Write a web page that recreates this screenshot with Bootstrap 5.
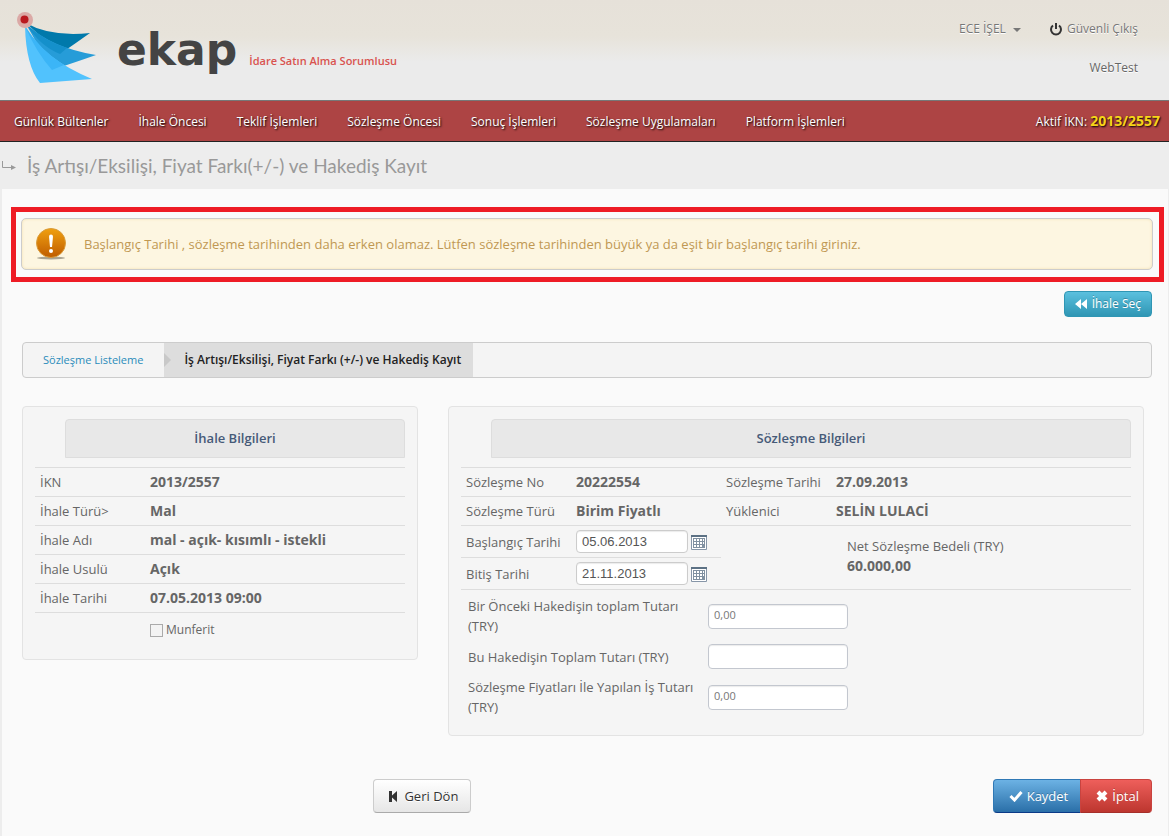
<!DOCTYPE html>
<html lang="tr">
<head>
<meta charset="utf-8">
<meta name="viewport" content="width=device-width, initial-scale=1">
<title>EKAP - Hakediş Kayıt</title>
<link rel="stylesheet" href="https://cdn.jsdelivr.net/npm/bootstrap@5.3.0/dist/css/bootstrap.min.css">
<script src="https://cdn.jsdelivr.net/npm/bootstrap@5.3.0/dist/js/bootstrap.bundle.min.js" defer></script>
<style>
body{font-family:"Open Sans","Noto Sans",sans-serif;font-size:13px;line-height:20px;color:#666;background:#fafafa}
a{text-decoration:none}
.top{height:100px;background:linear-gradient(#e6e1d9 0,#e7e3da 36%,#ebebeb 62%,#ebebeb);padding:0 31px 0 13px}
.brand-mark{width:84px;height:72px;margin-top:12px}
.brand-text{font:bold 44px/50px "DejaVu Sans",sans-serif;color:#444;margin:25px 0 0 20px}
.role{font-size:11px;font-weight:600;color:#d9534f;margin:51px 0 0 12px}
.user{font-size:12px;margin-top:19px;text-shadow:0 1px 0 #fff}
.user a,.user button{color:#777}
.user button{background:none;border:0;padding:0;text-shadow:inherit}
.firm{margin-top:19px}
.main-nav{background:#ad4444;border-top:1px solid #777;border-bottom:1px solid #222;height:42px;padding:0 9px 0 14px}
.main-nav a,.main-nav .ikn{color:#fff;font-size:12px;text-shadow:1px 1px 2px #000}
.main-nav ul{gap:30px}
.ikn b{color:#f6d518;font-size:14px}
.title-bar{background:#ededed;height:47px;padding-left:2px}
.title-bar h1{font:19px/30px Lato,"Open Sans",sans-serif;color:#999;margin:0 0 0 11px}
.page{border-left:2px solid #ededed;border-right:1px solid #ededed;padding:18px 4px 23px 9px}
.notice-frame{border:5px solid #ee1c25;padding:6px 6px 7px 5px}
.notice{height:52px;margin:0;padding:0 14px;gap:18px;background:#fdf6e1;border:1px solid #ccc;border-radius:5px;color:#c09853;box-shadow:inset 0 0 3px #f2dfae}
.body-area{padding:9px 12px 0 11px}
.btn{--bs-btn-font-size:13px;--bs-btn-line-height:18px;--bs-btn-border-radius:4px;color:#fff;text-shadow:0 -1px 0 rgba(0,0,0,.25)}
.btn:hover{color:#fff}
.btn-pick{height:26px;padding:3px 10px;gap:5px;font-size:12px;line-height:18px;background:linear-gradient(#5bc0de,#2f96b4);border-color:#2f96b4}
.crumbs{height:36px;margin-top:25px;border:1px solid #ccc;border-radius:4px;background:#f4f4f4;font-size:12px;overflow:hidden}
.crumbs li{padding:0 21px 0 20px;line-height:34px}
.crumbs a{color:#2a8cbb;font-size:11px}
.crumbs .here{padding:0 12px 0 20px;background:#ddd;color:#222;font-weight:600;position:relative}
.crumbs .here::before{content:"";position:absolute;left:0;top:10px;border:7px solid transparent;border-left-color:#c8c8c8;border-right:0}
.panels{display:grid;grid-template-columns:396fr 696fr;gap:30px;align-items:start;margin:28px 8px 0 0}
.panel{background:#f5f5f5;border:1px solid #e3e3e3;border-radius:4px;padding:12px}
.panel h2{height:39px;margin:0 0 9px 30px;border:1px solid #ddd;border-radius:4px 4px 0 0;background:#e8e8e8;color:#465a78;font-size:13px;font-weight:600;line-height:37px;text-align:center}
.facts{width:100%;table-layout:fixed}
.facts th,.facts td{height:29px;border-top:1px solid #ddd;padding:0 5px;font-weight:400;vertical-align:middle}
.facts td{font-weight:700;font-size:14px}
.facts tr:last-child>*,.facts .net{border-bottom:1px solid #ddd}
.facts .wide{height:32px}
.facts .net{padding:0 16px 3px 126px}
.net div{font-size:13px;font-weight:400}
.k{width:110px}.v{width:150px}
.munferit{padding:7px 0 0 115px;gap:3px;margin-bottom:7px;font-size:12px}
.form-control{border-color:#ccc;border-radius:4px;color:#555;box-shadow:inset 0 1px 1px rgba(0,0,0,.08);background:#fff}
.date-row{gap:3px}
.date-in{width:112px;height:23px;padding:0 5px;font:13px "Liberation Sans",sans-serif;min-height:0}
.sum-in{width:140px;height:25px;padding:0 5px 4px;font-size:11px;line-height:20px;min-height:0;color:#777;border-color:#c3c7cf}
.cal{border:0;background:none;padding:0;width:16px;height:16px;line-height:0}
.sums{display:grid;grid-template-columns:230px 140px;gap:8px 10px;align-items:center;padding:6px 7px 6px}
.form-check-input.tick{width:13px;height:13px;margin:0;border-radius:0;border-color:#aaa;background-color:#f3f3f3}
.actions{margin-top:43px;padding-left:31.1%}
.actions .btn{height:34px;padding:0 12px 0 15px}
.btn-back{gap:7px;background:linear-gradient(#fff,#e6e6e6);border-color:#ccc;border-bottom-color:#aaa;color:#333;text-shadow:0 1px 0 #fff}
.btn-back:hover{color:#333}
.btn-save{background:linear-gradient(#6cb2e4,#2a6fa8);border-color:#2f78b5;border-bottom-color:#0a3a87}
.btn-stop{background:linear-gradient(#ee5f5b,#bd362f);border-color:#c9433f;border-bottom-color:#a52f2a}
.btn-group svg{margin-bottom:3px}
</style>
</head>
<body>
<header class="top d-flex align-items-start">
  <svg class="brand-mark flex-shrink-0" viewBox="13 12 84 72" role="img" aria-label="ekap">
    <path d="M26 23Q50 37 90 33Q76 43 60 54Z" fill="#0079ab"/>
    <path d="M26 24Q52 48 96 55Q76 62 52 70Z" fill="#269cd8"/>
    <path d="M26 24Q46 42 67 48L60 54Q40 46 26 24Z" fill="#1590cb"/>
    <path d="M25 26Q42 58 92 79L40 83Q26 66 25 26Z" fill="#51c2fd"/>
    <path d="M25 26Q40 50 64 65L52 70Q36 52 25 26Z" fill="#3bb5f7"/>
    <circle cx="25" cy="20" r="8" fill="#dba9a6"/><circle cx="24.500" cy="19.500" r="4" fill="#b9191f"/>
  </svg>
  <div class="brand-text">ekap</div>
  <div class="role">İdare Satın Alma Sorumlusu</div>
  <div class="user ms-auto text-end">
    <div class="d-flex align-items-center justify-content-end">
      <button type="button">ECE İŞEL <svg width="8" height="4" class="ms-1"><path d="M0 0h8l-4 4z" fill="#777"/></svg></button>
      <a href="#" class="ms-4 ps-1"><svg width="14" height="14" viewBox="0 0 14 14" class="me-1" fill="none" stroke="#333" stroke-width="2"><path d="M4 2.500a5 5 0 1 0 6 0M7 0v6"/></svg>Güvenli Çıkış</a>
    </div>
    <div class="firm">WebTest</div>
  </div>
</header>
<nav class="main-nav d-flex align-items-center justify-content-between">
  <ul class="list-unstyled d-flex m-0">
    <li><a href="#">Günlük Bültenler</a></li>
    <li><a href="#">İhale Öncesi</a></li>
    <li><a href="#">Teklif İşlemleri</a></li>
    <li><a href="#">Sözleşme Öncesi</a></li>
    <li><a href="#">Sonuç İşlemleri</a></li>
    <li><a href="#">Sözleşme Uygulamaları</a></li>
    <li><a href="#">Platform İşlemleri</a></li>
  </ul>
  <span class="ikn">Aktif İKN: <b>2013/2557</b></span>
</nav>
<div class="title-bar d-flex align-items-center">
  <svg width="14" height="10"><path d="M.500 0v6.500H10" fill="none" stroke="#999"/><path d="M9 4l5 2.500L9 9z" fill="#999"/></svg>
  <h1>İş Artışı/Eksilişi, Fiyat Farkı(+/-) ve Hakediş Kayıt</h1>
</div>
<main class="page">
  <div class="notice-frame">
    <div class="notice alert d-flex align-items-center" role="alert">
      <svg width="30" height="33" viewBox="0 0 30 33" class="flex-shrink-0"><defs><linearGradient id="o" x1="0" y1="0" x2="0" y2="1"><stop offset="0" stop-color="#f0a010"/><stop offset="1" stop-color="#bf5c00"/></linearGradient></defs><ellipse cx="15" cy="30" rx="14" ry="1.500" fill="#aaa493"/><circle cx="15" cy="15" r="14.500" fill="url(#o)" stroke="#d99b3a"/><path d="M13 8.500a2 2 0 0 1 4 0L16 19h-2z" fill="#fff"/><circle cx="15" cy="23" r="2" fill="#fff"/></svg>
      <span>Başlangıç Tarihi , sözleşme tarihinden daha erken olamaz. Lütfen sözleşme tarihinden büyük ya da eşit bir başlangıç tarihi giriniz.</span>
    </div>
  </div>
  <div class="body-area">
    <div class="d-flex justify-content-end">
      <button type="button" class="btn btn-pick d-flex align-items-center"><svg width="12" height="12" fill="#fff"><path d="M6 1v10L0 6zM12 1v10L6 6z"/></svg>İhale Seç</button>
    </div>
    <nav aria-label="breadcrumb"><ol class="crumbs list-unstyled d-flex mb-0">
      <li><a href="#">Sözleşme Listeleme</a></li>
      <li class="here" aria-current="page">İş Artışı/Eksilişi, Fiyat Farkı (+/-) ve Hakediş Kayıt</li>
    </ol></nav>
    <div class="panels">
      <section class="panel">
        <h2>İhale Bilgileri</h2>
        <table class="facts">
          <colgroup><col class="k"><col></colgroup>
          <tr><th>İKN</th><td>2013/2557</td></tr>
          <tr><th>İhale Türü&gt;</th><td>Mal</td></tr>
          <tr><th>İhale Adı</th><td>mal - açık- kısımlı - istekli</td></tr>
          <tr><th>İhale Usulü</th><td>Açık</td></tr>
          <tr><th>İhale Tarihi</th><td>07.05.2013 09:00</td></tr>
        </table>
        <div class="munferit d-flex align-items-center"><input class="form-check-input tick" type="checkbox" id="munferit"><label for="munferit">Munferit</label></div>
      </section>
      <section class="panel">
        <h2>Sözleşme Bilgileri</h2>
        <table class="facts">
          <colgroup><col class="k"><col class="v"><col class="k"><col></colgroup>
          <tr><th>Sözleşme No</th><td>20222554</td><th>Sözleşme Tarihi</th><td>27.09.2013</td></tr>
          <tr><th>Sözleşme Türü</th><td>Birim Fiyatlı</td><th>Yüklenici</th><td>SELİN LULACİ</td></tr>
          <tr><th class="wide"><label for="bas">Başlangıç Tarihi</label></th><td><div class="date-row d-flex align-items-center"><input id="bas" class="form-control date-in" type="text" value="05.06.2013"><button type="button" class="cal" aria-label="Başlangıç tarihi seç"><svg width="16" height="16"><use href="#calendar"/></svg></button></div></td>
            <td colspan="2" rowspan="2" class="net"><div>Net Sözleşme Bedeli (TRY)</div>60.000,00</td></tr>
          <tr><th class="wide"><label for="bit">Bitiş Tarihi</label></th><td><div class="date-row d-flex align-items-center"><input id="bit" class="form-control date-in" type="text" value="21.11.2013"><button type="button" class="cal" aria-label="Bitiş tarihi seç"><svg width="16" height="16"><use href="#calendar"/></svg></button></div></td></tr>
        </table>
        <div class="sums">
          <label for="s1">Bir Önceki Hakedişin toplam Tutarı (TRY)</label><input id="s1" class="form-control sum-in" type="text" value="0,00">
          <label for="s2">Bu Hakedişin Toplam Tutarı (TRY)</label><input id="s2" class="form-control sum-in" type="text">
          <label for="s3">Sözleşme Fiyatları İle Yapılan İş Tutarı (TRY)</label><input id="s3" class="form-control sum-in" type="text" value="0,00">
        </div>
      </section>
    </div>
    <div class="actions d-flex justify-content-between">
      <button type="button" class="btn btn-back d-flex align-items-center"><svg width="8" height="11" viewBox="0 0 8 11" fill="#333"><path d="M0 0h3v4.500L8 0v11L3 6.500V11H0z"/></svg>Geri Dön</button>
      <div class="btn-group">
        <button type="button" class="btn btn-save"><svg width="14" height="12" class="me-1" fill="none" stroke="#fff" stroke-width="3"><path d="M1.500 6l4 4L12.500 2"/></svg>Kaydet</button>
        <button type="button" class="btn btn-stop"><svg width="12" height="12" class="me-1" fill="none" stroke="#fff" stroke-width="4"><path d="M2 2l8 8M10 2l-8 8"/></svg>İptal</button>
      </div>
    </div>
  </div>
</main>
<svg width="0" height="0" class="position-absolute" aria-hidden="true"><symbol id="calendar" viewBox="0 0 16 16"><path d="M.500 1.500h15v14H.500z" fill="#fff" stroke="#8796a8"/><path d="M0 1h16v2H0z" fill="#5c7184"/><path d="M2 4h12v10H2z" fill="#8191a1"/><path d="M3 5h2v2H3zM6 5h2v2H6zM9 5h2v2H9zM12 5h1v2h-1zM3 8h2v2H3zM6 8h2v2H6zM9 8h2v2H9zM12 8h1v2h-1zM3 11h2v2H3zM6 11h2v2H6zM9 11h2v2H9z" fill="#fff"/></symbol></svg>
</body>
</html>
